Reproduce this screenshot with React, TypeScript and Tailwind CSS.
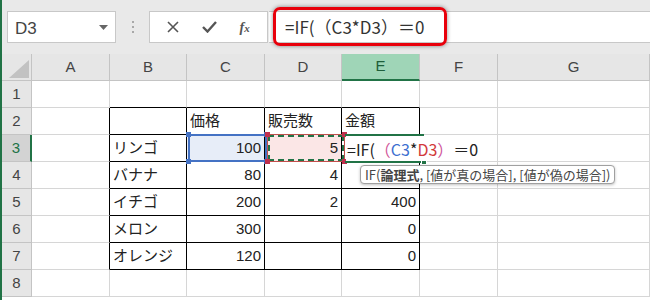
import React from "react";

const COLS = ["A", "B", "C", "D", "E", "F", "G"];

type Cell = { v: string; num?: boolean };

const DATA: Record<number, Record<string, Cell>> = {
  2: { C: { v: "価格" }, D: { v: "販売数" }, E: { v: "金額" } },
  3: { B: { v: "リンゴ" }, C: { v: "100", num: true }, D: { v: "5", num: true } },
  4: { B: { v: "バナナ" }, C: { v: "80", num: true }, D: { v: "4", num: true } },
  5: { B: { v: "イチゴ" }, C: { v: "200", num: true }, D: { v: "2", num: true }, E: { v: "400", num: true } },
  6: { B: { v: "メロン" }, C: { v: "300", num: true }, E: { v: "0", num: true } },
  7: { B: { v: "オレンジ" }, C: { v: "120", num: true }, E: { v: "0", num: true } },
};

const inTable = (r: number, c: string) => r >= 2 && r <= 7 && ["B", "C", "D", "E"].includes(c);

function cellClass(r: number, c: string) {
  const black = inTable(r, c);
  const rightBlack = black || (c === "A" && r >= 2 && r <= 7);
  const bottomBlack = black || (r === 1 && ["B", "C", "D", "E"].includes(c));
  let cls = "flex items-center px-[3px] text-[15px] text-[#222] border-r border-b ";
  cls += rightBlack ? "border-r-black " : "border-r-[#d6d6d6] ";
  cls += bottomBlack ? "border-b-black " : "border-b-[#d6d6d6] ";
  if (r === 3 && c === "C") cls += "bg-[#e7edf8] ";
  if (r === 3 && c === "D") cls += "bg-[#fbe6e6] ";
  return cls;
}

function Corner({ color, cls }: { color: string; cls: string }) {
  return <div className={`absolute w-[5px] h-[5px] ${color} ${cls}`} />;
}

export default function App() {
  const jp = { fontFamily: '"Liberation Sans", "Noto Sans CJK JP", sans-serif' };
  const formulaFont = { fontFamily: '"Noto Sans CJK JP", sans-serif' };
  return (
    <div className="relative w-[650px] h-[300px] overflow-hidden bg-white border-l-2 border-[#217346]" style={jp}>
      {/* toolbar */}
      <div className="h-[54px] bg-[#e9e9e9] flex items-start pt-[11px]">
        <div className="ml-[5px] w-[109px] h-[32px] bg-white border border-[#c8c8c8] flex items-center justify-between pl-[7px] pr-[7px]">
          <span className="text-[17px] text-[#444] mt-[3px]">D3</span>
          <svg width="9" height="5" viewBox="0 0 9 5"><path d="M0 0h9L4.5 5z" fill="#666" /></svg>
        </div>
        <div className="w-[33px] h-[32px] flex flex-col items-center justify-center gap-[3px]">
          <div className="w-[2px] h-[2px] bg-[#a8a8a8]" />
          <div className="w-[2px] h-[2px] bg-[#a8a8a8]" />
          <div className="w-[2px] h-[2px] bg-[#a8a8a8]" />
        </div>
        <div className="w-[119px] h-[32px] bg-white border border-[#c8c8c8] flex items-center justify-around px-[6px]">
          <svg width="12" height="12" viewBox="0 0 12 12"><path d="M1 1l10 10M11 1L1 11" stroke="#555" strokeWidth="1.6" /></svg>
          <svg width="15" height="12" viewBox="0 0 15 12"><path d="M1 6l4.5 4.5L14 1" stroke="#555" strokeWidth="2.4" fill="none" /></svg>
          <span className="italic text-[14px] text-[#555] font-bold" style={{ fontFamily: '"Liberation Serif", serif' }}>
            f<span className="text-[11px]">x</span>
          </span>
        </div>
        <div className="flex-1 h-[32px] bg-white border-y border-[#c8c8c8] ml-[1px] flex items-center pl-[16px]">
          <span className="text-[17px] text-[#333] [text-spacing-trim:space-all]" style={formulaFont}>=IF(（C3*D3）＝0</span>
        </div>
      </div>

      {/* red highlight */}
      <div className="absolute left-[271px] top-[7px] w-[174px] h-[39px] rounded-[7px] border-[3px] border-[#e8000b] shadow-[0_0_4px_rgba(0,0,0,0.45)]" />

      {/* sheet */}
      <div className="grid grid-cols-[30px_78px_77px_78px_77px_78px_78px_152px] grid-rows-[27px_27px_27px_27px_27px_27px_27px_27px_27px]">
        <div className="relative bg-[#e6e6e6] border-r border-b border-[#c4c4c4]">
          <svg className="absolute right-[2px] bottom-[2px]" width="20" height="18" viewBox="0 0 20 18"><path d="M20 0V18H0z" fill="#c2c2c2" /></svg>
        </div>
        {COLS.map((c) => (
          <div
            key={c}
            className={
              c === "E"
                ? "flex items-center justify-center text-[15px] text-[#1e5e3a] bg-[#9fd5b7] border-r border-[#c4c4c4] border-b-2 border-b-[#217346]"
                : "flex items-center justify-center text-[15px] text-[#444] bg-[#e6e6e6] border-r border-b border-[#c4c4c4]"
            }
          >
            {c}
          </div>
        ))}
        {[1, 2, 3, 4, 5, 6, 7, 8].map((r) => (
          <React.Fragment key={r}>
            <div
              className={
                r === 3
                  ? "flex items-center justify-center text-[15px] text-[#217346] bg-[#d3d3d3] border-r-2 border-r-[#217346] border-b border-b-[#c4c4c4]"
                  : "flex items-center justify-center text-[15px] text-[#444] bg-[#e6e6e6] border-r border-b border-[#c4c4c4]"
              }
            >
              {r}
            </div>
            {COLS.map((c) => {
              const cell = DATA[r]?.[c];
              return (
                <div key={c} className={cellClass(r, c) + (cell?.num ? "justify-end" : "justify-start")}>
                  {cell ? cell.v : ""}
                </div>
              );
            })}
          </React.Fragment>
        ))}
      </div>

      {/* C3 reference (blue) */}
      <div className="absolute left-[186px] top-[134px] w-[79px] h-[28px] border-2 border-[#4472c4]">
        <Corner color="bg-[#4472c4]" cls="-left-[4px] -top-[4px]" />
        <Corner color="bg-[#4472c4]" cls="-right-[4px] -top-[4px]" />
        <Corner color="bg-[#4472c4]" cls="-left-[4px] -bottom-[4px]" />
        <Corner color="bg-[#4472c4]" cls="-right-[4px] -bottom-[4px]" />
      </div>

      {/* D3 reference (red + marching ants) */}
      <div className="absolute left-[265px] top-[134px] w-[78px] h-[28px] border border-[#c0504d]">
        <div className="absolute inset-0 border-2 border-dashed border-[#217346]" />
        <Corner color="bg-[#c0304d]" cls="-left-[3px] -top-[3px]" />
        <Corner color="bg-[#c0304d]" cls="-right-[3px] -top-[3px]" />
        <Corner color="bg-[#c0304d]" cls="-left-[3px] -bottom-[3px]" />
        <Corner color="bg-[#c0304d]" cls="-right-[3px] -bottom-[3px]" />
      </div>

      {/* E3 active cell in edit mode */}
      <div className="absolute left-[343px] top-[134px] w-[79px] h-[29px] border-y-2 border-[#217346]">
        <div className="absolute -right-[3px] -bottom-[4px] w-[6px] h-[6px] bg-[#217346] border border-white" />
      </div>
      <div className="absolute left-[344px] top-[136px] w-[140px] h-[25px] bg-white flex items-center pl-[1px]">
        <span className="text-[16px] text-[#222] whitespace-nowrap [text-spacing-trim:space-all]" style={formulaFont}>
          =IF(<span className="text-[#d0559a]">（</span>
          <span className="text-[#3d6fd0]">C3</span>*<span className="text-[#d23a3a]">D3</span>
          <span className="text-[#d0559a]">）</span>＝0
        </span>
      </div>

      {/* argument tooltip */}
      <div className="absolute left-[358px] top-[165px] h-[19px] px-[4px] flex items-center bg-white border border-[#a0a0a0] rounded-[4px] shadow-[0_1px_3px_rgba(0,0,0,0.25)]">
        <span className="text-[13px] text-[#444] whitespace-nowrap leading-none" style={formulaFont}>
          IF(<span className="font-bold">論理式</span>, [値が真の場合], [値が偽の場合])
        </span>
      </div>
    </div>
  );
}
